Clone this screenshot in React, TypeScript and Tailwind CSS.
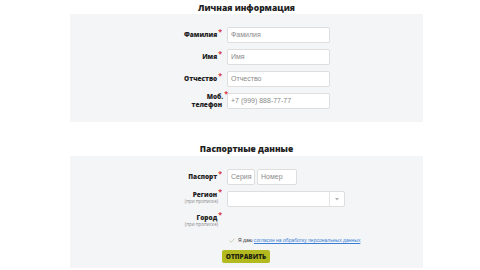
import React from 'react'

function Req() {
  return <span className="relative -top-[3px] ml-[1px] text-[7px] font-bold leading-none text-[#d8323c]">*</span>
}

function Label({ title, sub, multiline }: { title: React.ReactNode; sub?: string; multiline?: boolean }) {
  return (
    <div className="w-[157px] shrink-0 pr-[5px] text-right">
      <div className="text-[6.5px] font-extrabold leading-[8px] text-[#222]">
        {title}
        {!multiline && <Req />}
      </div>
      {sub && <div className="pr-[4px] text-[4.5px] leading-[5px] text-[#888]">{sub}</div>}
    </div>
  )
}

function Field({ placeholder, w = 'w-[103px]' }: { placeholder?: string; w?: string }) {
  return (
    <div
      className={`${w} flex h-[16px] items-center rounded-[2px] border border-[#dedede] bg-white px-[3px] font-['Liberation_Sans',sans-serif] text-[7px] text-[#8a8a8a]`}
    >
      {placeholder}
    </div>
  )
}

function Row({
  children,
  label,
  sub,
  multiline,
  align = 'items-center',
}: {
  children?: React.ReactNode
  label: React.ReactNode
  sub?: string
  multiline?: boolean
  align?: string
}) {
  return (
    <div className={`flex ${align}`}>
      <Label title={label} sub={sub} multiline={multiline} />
      {children}
    </div>
  )
}

export default function App() {
  return (
    <div className="h-[270px] w-[480px] overflow-hidden bg-white font-['Open_Sans',sans-serif]">
      <div className="ml-[70px] w-[353px]">
        <h2 className="pt-[2px] text-center text-[8.5px] font-extrabold leading-[12px] text-[#222]">Личная информация</h2>

        <div className="flex flex-col gap-[6px] bg-[#f4f5f7] py-[13px]">
          <Row label="Фамилия">
            <Field placeholder="Фамилия" />
          </Row>
          <Row label="Имя">
            <Field placeholder="Имя" />
          </Row>
          <Row label="Отчество">
            <Field placeholder="Отчество" />
          </Row>
          <Row
            multiline
            label={
              <>
                <span className="mr-[-6px]">
                  Моб.
                  <Req />
                </span>
                <br />
                телефон
              </>
            }
          >
            <Field placeholder="+7 (999) 888-77-77" />
          </Row>
        </div>

        <h2 className="pt-[21px] pb-[1px] text-center text-[8.5px] font-extrabold leading-[12px] text-[#222]">Паспортные данные</h2>

        <div className="flex flex-col bg-[#f4f5f7] pt-[13px] pb-[5px]">
          <Row label="Паспорт">
            <div className="flex gap-[2px]">
              <Field placeholder="Серия" w="w-[28px]" />
              <Field placeholder="Номер" w="w-[40px]" />
            </div>
          </Row>

          <div className="mt-[6px]">
            <Row label="Регион" sub="(при прописке)" align="items-start">
              <div className="flex h-[16px] w-[118px] rounded-[2px] border border-[#dedede] bg-white">
                <div className="flex-1" />
                <div className="flex w-[15px] items-center justify-center border-l border-[#e4e4e4]">
                  <svg width="4" height="3" viewBox="0 0 4 3">
                    <path d="M0 0 L4 0 L2 2.5 Z" fill="#b0b0b0" />
                  </svg>
                </div>
              </div>
            </Row>
          </div>

          <div className="mt-[7px] h-[16px]">
            <Row label="Город" sub="(при прописке)" align="items-start" />
          </div>

          <div className="mt-[6px] ml-[159px] flex h-[9px] items-center gap-[3px] font-['Liberation_Sans',sans-serif] text-[5px] text-[#333]">
            <svg width="6" height="5" viewBox="0 0 6 5">
              <path d="M0.5 2.6 L2.2 4.2 L5.5 0.6" fill="none" stroke="#c4c9b0" strokeWidth="0.9" />
            </svg>
            <span>
              Я даю{' '}
              <span className="text-[#3a7fd5] underline">согласие на обработку персональных данных</span>
            </span>
          </div>

          <button className="mt-[5px] ml-[152px] flex h-[13px] w-[48px] items-center justify-center rounded-[2px] bg-[#b3ba1f] text-[6.5px] font-extrabold text-[#1f2410]">
            ОТПРАВИТЬ
          </button>
        </div>
      </div>
    </div>
  )
}
